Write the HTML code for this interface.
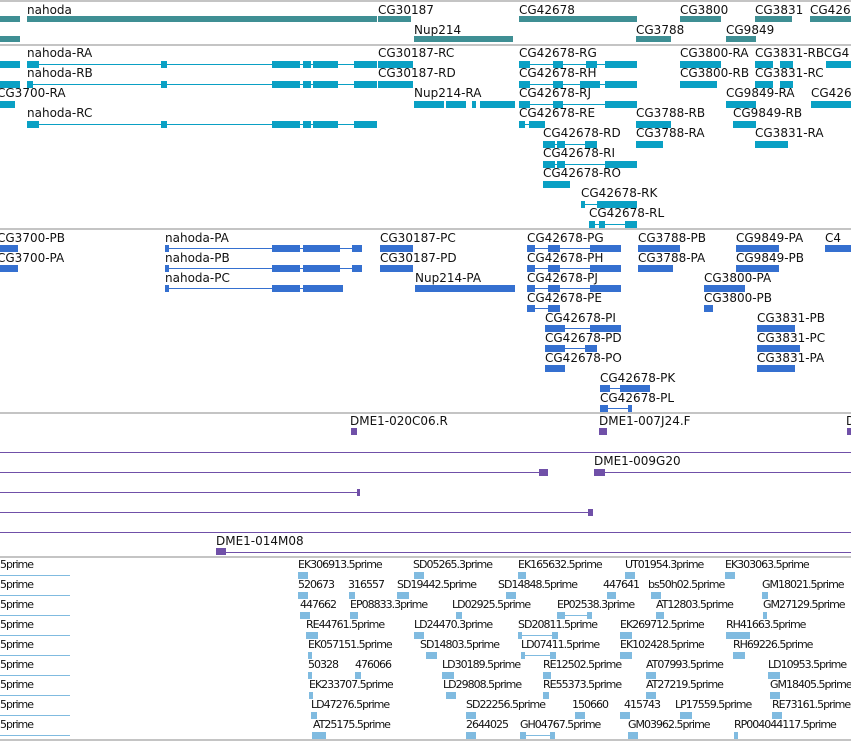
<!DOCTYPE html>
<html><head><meta charset="utf-8"><style>
body{margin:0;width:851px;height:741px;background:#fff;position:relative;overflow:hidden;font-family:"DejaVu Sans","Liberation Sans",sans-serif}
div{position:absolute}
.t{font-size:12px;line-height:14px;color:#111;white-space:nowrap}
.s{font-size:11px;letter-spacing:-1px;line-height:13px;color:#111;white-space:nowrap}
.sep{left:0;width:851px;height:2px;background:#c4c4c4}
.g{height:6px;background:#3f8f94}
.c{background:#0aa0c4}
.b{background:#3570d0}
.p{background:#7050a8}
.q{background:#80bbe0}
.ln{height:1px}
.ex{height:7px}
</style></head><body>
<div class="sep" style="top:0"></div>
<div class="sep" style="top:44px"></div>
<div class="sep" style="top:228px"></div>
<div class="sep" style="top:412px"></div>
<div class="sep" style="top:556px"></div>
<div class="sep" style="top:739px"></div>

<!-- Track 1 genes -->
<div class="t" style="left:27px;top:3px">nahoda</div>
<div class="g" style="left:0;top:16px;width:20px"></div>
<div class="g" style="left:27px;top:16px;width:350px"></div>
<div class="t" style="left:378px;top:3px">CG30187</div>
<div class="g" style="left:378px;top:16px;width:33px"></div>
<div class="t" style="left:519px;top:3px">CG42678</div>
<div class="g" style="left:519px;top:16px;width:118px"></div>
<div class="t" style="left:680px;top:3px">CG3800</div>
<div class="g" style="left:680px;top:16px;width:41px"></div>
<div class="t" style="left:755px;top:3px">CG3831</div>
<div class="g" style="left:755px;top:16px;width:37px"></div>
<div class="t" style="left:810px;top:3px">CG426</div>
<div class="g" style="left:810px;top:16px;width:41px"></div>
<div class="g" style="left:0;top:36px;width:20px"></div>
<div class="t" style="left:414px;top:23px">Nup214</div>
<div class="g" style="left:414px;top:36px;width:99px"></div>
<div class="t" style="left:636px;top:23px">CG3788</div>
<div class="g" style="left:636px;top:36px;width:35px"></div>
<div class="t" style="left:726px;top:23px">CG9849</div>
<div class="g" style="left:726px;top:36px;width:30px"></div>

<!-- Track 2 transcripts -->
<div class="c ex" style="left:0;top:61px;width:20px"></div>
<div class="t" style="left:27px;top:46px">nahoda-RA</div>
<div class="c ln" style="left:27px;top:64px;width:350px"></div>
<div class="c ex" style="left:27px;top:61px;width:12px"></div><div class="c ex" style="left:161px;top:61px;width:6px"></div><div class="c ex" style="left:272px;top:61px;width:28px"></div><div class="c ex" style="left:303px;top:61px;width:8px"></div><div class="c ex" style="left:313px;top:61px;width:25px"></div><div class="c ex" style="left:354px;top:61px;width:23px"></div>
<div class="t" style="left:378px;top:46px">CG30187-RC</div>
<div class="c ex" style="left:378px;top:61px;width:35px"></div>
<div class="t" style="left:519px;top:46px">CG42678-RG</div>
<div class="c ln" style="left:519px;top:64px;width:118px"></div>
<div class="c ex" style="left:519px;top:61px;width:11px"></div><div class="c ex" style="left:553px;top:61px;width:10px"></div><div class="c ex" style="left:586px;top:61px;width:11px"></div><div class="c ex" style="left:605px;top:61px;width:32px"></div>
<div class="t" style="left:680px;top:46px">CG3800-RA</div>
<div class="c ex" style="left:680px;top:61px;width:41px"></div>
<div class="t" style="left:755px;top:46px">CG3831-RBCG4</div>
<div class="c ex" style="left:755px;top:61px;width:18px"></div><div class="c ex" style="left:780px;top:61px;width:13px"></div>
<div class="c ex" style="left:826px;top:61px;width:25px"></div>
<div class="c ex" style="left:0;top:81px;width:20px"></div>
<div class="t" style="left:27px;top:66px">nahoda-RB</div>
<div class="c ln" style="left:27px;top:84px;width:350px"></div>
<div class="c ex" style="left:27px;top:81px;width:6px"></div><div class="c ex" style="left:161px;top:81px;width:6px"></div><div class="c ex" style="left:272px;top:81px;width:28px"></div><div class="c ex" style="left:303px;top:81px;width:8px"></div><div class="c ex" style="left:313px;top:81px;width:25px"></div><div class="c ex" style="left:354px;top:81px;width:23px"></div>
<div class="t" style="left:378px;top:66px">CG30187-RD</div>
<div class="c ex" style="left:378px;top:81px;width:35px"></div>
<div class="t" style="left:519px;top:66px">CG42678-RH</div>
<div class="c ln" style="left:519px;top:84px;width:118px"></div>
<div class="c ex" style="left:519px;top:81px;width:11px"></div><div class="c ex" style="left:553px;top:81px;width:10px"></div><div class="c ex" style="left:580px;top:81px;width:20px"></div><div class="c ex" style="left:605px;top:81px;width:32px"></div>
<div class="t" style="left:680px;top:66px">CG3800-RB</div>
<div class="c ex" style="left:680px;top:81px;width:37px"></div>
<div class="t" style="left:755px;top:66px">CG3831-RC</div>
<div class="c ex" style="left:755px;top:81px;width:18px"></div><div class="c ex" style="left:780px;top:81px;width:13px"></div>
<div class="t" style="left:-3px;top:86px">CG3700-RA</div>
<div class="c ex" style="left:0;top:101px;width:15px"></div>
<div class="t" style="left:414px;top:86px">Nup214-RA</div>
<div class="c ex" style="left:414px;top:101px;width:30px"></div><div class="c ex" style="left:446px;top:101px;width:20px"></div><div class="c ex" style="left:472px;top:101px;width:4px"></div><div class="c ex" style="left:480px;top:101px;width:35px"></div>
<div class="t" style="left:519px;top:86px">CG42678-RJ</div>
<div class="c ln" style="left:519px;top:104px;width:118px"></div>
<div class="c ex" style="left:519px;top:101px;width:11px"></div><div class="c ex" style="left:553px;top:101px;width:10px"></div><div class="c ex" style="left:605px;top:101px;width:32px"></div>
<div class="t" style="left:726px;top:86px">CG9849-RA</div>
<div class="c ex" style="left:726px;top:101px;width:30px"></div>
<div class="t" style="left:811px;top:86px">CG426</div>
<div class="c ex" style="left:811px;top:101px;width:40px"></div>
<div class="t" style="left:27px;top:106px">nahoda-RC</div>
<div class="c ln" style="left:27px;top:124px;width:350px"></div>
<div class="c ex" style="left:27px;top:121px;width:12px"></div><div class="c ex" style="left:161px;top:121px;width:6px"></div><div class="c ex" style="left:272px;top:121px;width:28px"></div><div class="c ex" style="left:303px;top:121px;width:8px"></div><div class="c ex" style="left:313px;top:121px;width:25px"></div><div class="c ex" style="left:354px;top:121px;width:23px"></div>
<div class="t" style="left:519px;top:106px">CG42678-RE</div>
<div class="c ln" style="left:519px;top:124px;width:26px"></div>
<div class="c ex" style="left:519px;top:121px;width:6px"></div><div class="c ex" style="left:529px;top:121px;width:16px"></div>
<div class="t" style="left:636px;top:106px">CG3788-RB</div>
<div class="c ex" style="left:636px;top:121px;width:35px"></div>
<div class="t" style="left:733px;top:106px">CG9849-RB</div>
<div class="c ex" style="left:733px;top:121px;width:23px"></div>
<div class="t" style="left:543px;top:126px">CG42678-RD</div>
<div class="c ln" style="left:543px;top:144px;width:54px"></div>
<div class="c ex" style="left:543px;top:141px;width:12px"></div><div class="c ex" style="left:557px;top:141px;width:8px"></div><div class="c ex" style="left:585px;top:141px;width:12px"></div>
<div class="t" style="left:636px;top:126px">CG3788-RA</div>
<div class="c ex" style="left:636px;top:141px;width:27px"></div>
<div class="t" style="left:755px;top:126px">CG3831-RA</div>
<div class="c ex" style="left:755px;top:141px;width:33px"></div>
<div class="t" style="left:543px;top:146px">CG42678-RI</div>
<div class="c ln" style="left:543px;top:164px;width:94px"></div>
<div class="c ex" style="left:543px;top:161px;width:12px"></div><div class="c ex" style="left:557px;top:161px;width:8px"></div><div class="c ex" style="left:605px;top:161px;width:32px"></div>
<div class="t" style="left:543px;top:166px">CG42678-RO</div>
<div class="c ex" style="left:543px;top:181px;width:27px"></div>
<div class="t" style="left:581px;top:186px">CG42678-RK</div>
<div class="c ln" style="left:581px;top:204px;width:56px"></div>
<div class="c ex" style="left:581px;top:201px;width:4px"></div><div class="c ex" style="left:597px;top:201px;width:40px"></div>
<div class="t" style="left:589px;top:206px">CG42678-RL</div>
<div class="c ln" style="left:589px;top:224px;width:48px"></div>
<div class="c ex" style="left:589px;top:221px;width:6px"></div><div class="c ex" style="left:599px;top:221px;width:6px"></div><div class="c ex" style="left:625px;top:221px;width:12px"></div>

<!-- Track 3 proteins -->
<div class="t" style="left:-3px;top:231px">CG3700-PB</div>
<div class="b ex" style="left:0;top:245px;width:18px"></div>
<div class="t" style="left:165px;top:231px">nahoda-PA</div>
<div class="b ln" style="left:165px;top:248px;width:197px"></div>
<div class="b ex" style="left:165px;top:245px;width:4px"></div><div class="b ex" style="left:272px;top:245px;width:28px"></div><div class="b ex" style="left:303px;top:245px;width:37px"></div><div class="b ex" style="left:352px;top:245px;width:10px"></div>
<div class="t" style="left:380px;top:231px">CG30187-PC</div>
<div class="b ex" style="left:380px;top:245px;width:33px"></div>
<div class="t" style="left:527px;top:231px">CG42678-PG</div>
<div class="b ln" style="left:527px;top:248px;width:94px"></div>
<div class="b ex" style="left:527px;top:245px;width:8px"></div><div class="b ex" style="left:548px;top:245px;width:12px"></div><div class="b ex" style="left:590px;top:245px;width:31px"></div>
<div class="t" style="left:638px;top:231px">CG3788-PB</div>
<div class="b ex" style="left:638px;top:245px;width:42px"></div>
<div class="t" style="left:736px;top:231px">CG9849-PA</div>
<div class="b ex" style="left:736px;top:245px;width:43px"></div>
<div class="t" style="left:825px;top:231px">C4</div>
<div class="b ex" style="left:825px;top:245px;width:26px"></div>
<div class="t" style="left:-3px;top:251px">CG3700-PA</div>
<div class="b ex" style="left:0;top:265px;width:18px"></div>
<div class="t" style="left:165px;top:251px">nahoda-PB</div>
<div class="b ln" style="left:165px;top:268px;width:197px"></div>
<div class="b ex" style="left:165px;top:265px;width:4px"></div><div class="b ex" style="left:272px;top:265px;width:28px"></div><div class="b ex" style="left:303px;top:265px;width:37px"></div><div class="b ex" style="left:352px;top:265px;width:10px"></div>
<div class="t" style="left:380px;top:251px">CG30187-PD</div>
<div class="b ex" style="left:380px;top:265px;width:33px"></div>
<div class="t" style="left:527px;top:251px">CG42678-PH</div>
<div class="b ln" style="left:527px;top:268px;width:94px"></div>
<div class="b ex" style="left:527px;top:265px;width:8px"></div><div class="b ex" style="left:548px;top:265px;width:12px"></div><div class="b ex" style="left:590px;top:265px;width:31px"></div>
<div class="t" style="left:638px;top:251px">CG3788-PA</div>
<div class="b ex" style="left:638px;top:265px;width:35px"></div>
<div class="t" style="left:736px;top:251px">CG9849-PB</div>
<div class="b ex" style="left:736px;top:265px;width:43px"></div>
<div class="t" style="left:165px;top:271px">nahoda-PC</div>
<div class="b ln" style="left:165px;top:288px;width:177px"></div>
<div class="b ex" style="left:165px;top:285px;width:4px"></div><div class="b ex" style="left:272px;top:285px;width:28px"></div><div class="b ex" style="left:303px;top:285px;width:40px"></div>
<div class="t" style="left:415px;top:271px">Nup214-PA</div>
<div class="b ex" style="left:415px;top:285px;width:100px"></div>
<div class="t" style="left:527px;top:271px">CG42678-PJ</div>
<div class="b ln" style="left:527px;top:288px;width:94px"></div>
<div class="b ex" style="left:527px;top:285px;width:8px"></div><div class="b ex" style="left:548px;top:285px;width:12px"></div><div class="b ex" style="left:590px;top:285px;width:31px"></div>
<div class="t" style="left:704px;top:271px">CG3800-PA</div>
<div class="b ex" style="left:704px;top:285px;width:41px"></div>
<div class="t" style="left:527px;top:291px">CG42678-PE</div>
<div class="b ln" style="left:527px;top:308px;width:33px"></div>
<div class="b ex" style="left:527px;top:305px;width:8px"></div><div class="b ex" style="left:548px;top:305px;width:12px"></div>
<div class="t" style="left:704px;top:291px">CG3800-PB</div>
<div class="b ex" style="left:704px;top:305px;width:9px"></div>
<div class="t" style="left:545px;top:311px">CG42678-PI</div>
<div class="b ln" style="left:545px;top:328px;width:76px"></div>
<div class="b ex" style="left:545px;top:325px;width:20px"></div><div class="b ex" style="left:590px;top:325px;width:31px"></div>
<div class="t" style="left:757px;top:311px">CG3831-PB</div>
<div class="b ex" style="left:757px;top:325px;width:38px"></div>
<div class="t" style="left:545px;top:331px">CG42678-PD</div>
<div class="b ln" style="left:545px;top:348px;width:52px"></div>
<div class="b ex" style="left:545px;top:345px;width:20px"></div><div class="b ex" style="left:585px;top:345px;width:12px"></div>
<div class="t" style="left:757px;top:331px">CG3831-PC</div>
<div class="b ex" style="left:757px;top:345px;width:43px"></div>
<div class="t" style="left:545px;top:351px">CG42678-PO</div>
<div class="b ex" style="left:545px;top:365px;width:20px"></div>
<div class="t" style="left:757px;top:351px">CG3831-PA</div>
<div class="b ex" style="left:757px;top:365px;width:38px"></div>
<div class="t" style="left:600px;top:371px">CG42678-PK</div>
<div class="b ln" style="left:600px;top:388px;width:50px"></div>
<div class="b ex" style="left:600px;top:385px;width:10px"></div><div class="b ex" style="left:620px;top:385px;width:30px"></div>
<div class="t" style="left:600px;top:391px">CG42678-PL</div>
<div class="b ln" style="left:600px;top:408px;width:32px"></div>
<div class="b ex" style="left:600px;top:405px;width:8px"></div><div class="b ex" style="left:628px;top:405px;width:4px"></div>

<!-- Track 4 clones -->
<div class="t" style="left:350px;top:414px">DME1-020C06.R</div>
<div class="p ex" style="left:351px;top:428px;width:6px"></div>
<div class="t" style="left:599px;top:414px">DME1-007J24.F</div>
<div class="p ex" style="left:599px;top:428px;width:8px"></div>
<div class="t" style="left:846px;top:414px">D</div>
<div class="p ex" style="left:847px;top:428px;width:4px"></div>
<div class="p ln" style="left:0;top:452px;width:851px"></div>
<div class="t" style="left:594px;top:454px">DME1-009G20</div>
<div class="p ln" style="left:0;top:472px;width:545px"></div>
<div class="p ex" style="left:539px;top:469px;width:9px"></div>
<div class="p ln" style="left:594px;top:472px;width:257px"></div>
<div class="p ex" style="left:594px;top:469px;width:11px"></div>
<div class="p ln" style="left:0;top:492px;width:360px"></div>
<div class="p ex" style="left:357px;top:489px;width:3px"></div>
<div class="p ln" style="left:0;top:512px;width:593px"></div>
<div class="p ex" style="left:588px;top:509px;width:5px"></div>
<div class="p ln" style="left:0;top:532px;width:851px"></div>
<div class="t" style="left:216px;top:534px">DME1-014M08</div>
<div class="p ln" style="left:216px;top:552px;width:635px"></div>
<div class="p ex" style="left:216px;top:548px;width:10px"></div>

<!-- Track 5 reads -->
<div class="s" style="left:0;top:558px">5prime</div><div class="q ln" style="left:0;top:575px;width:70px"></div>
<div class="s" style="left:0;top:578px">5prime</div><div class="q ln" style="left:0;top:595px;width:70px"></div>
<div class="s" style="left:0;top:598px">5prime</div><div class="q ln" style="left:0;top:615px;width:70px"></div>
<div class="s" style="left:0;top:618px">5prime</div><div class="q ln" style="left:0;top:635px;width:70px"></div>
<div class="s" style="left:0;top:638px">5prime</div><div class="q ln" style="left:0;top:655px;width:70px"></div>
<div class="s" style="left:0;top:658px">5prime</div><div class="q ln" style="left:0;top:675px;width:70px"></div>
<div class="s" style="left:0;top:678px">5prime</div><div class="q ln" style="left:0;top:695px;width:70px"></div>
<div class="s" style="left:0;top:698px">5prime</div><div class="q ln" style="left:0;top:715px;width:70px"></div>
<div class="s" style="left:0;top:718px">5prime</div><div class="q ln" style="left:0;top:735px;width:70px"></div>

<div class="s" style="left:298px;top:558px">EK306913.5prime</div><div class="q ex" style="left:298px;top:572px;width:10px"></div>
<div class="s" style="left:413px;top:558px">SD05265.3prime</div><div class="q ex" style="left:414px;top:572px;width:10px"></div>
<div class="s" style="left:518px;top:558px">EK165632.5prime</div><div class="q ex" style="left:518px;top:572px;width:8px"></div>
<div class="s" style="left:625px;top:558px">UT01954.3prime</div><div class="q ex" style="left:625px;top:572px;width:10px"></div>
<div class="s" style="left:725px;top:558px">EK303063.5prime</div><div class="q ex" style="left:725px;top:572px;width:10px"></div>

<div class="s" style="left:298px;top:578px">520673</div><div class="q ex" style="left:298px;top:592px;width:10px"></div>
<div class="s" style="left:348px;top:578px">316557</div><div class="q ex" style="left:349px;top:592px;width:6px"></div>
<div class="s" style="left:397px;top:578px">SD19442.5prime</div><div class="q ex" style="left:397px;top:592px;width:12px"></div>
<div class="s" style="left:498px;top:578px">SD14848.5prime</div><div class="q ex" style="left:506px;top:592px;width:10px"></div>
<div class="s" style="left:603px;top:578px">447641</div><div class="q ex" style="left:607px;top:592px;width:9px"></div>
<div class="s" style="left:648px;top:578px">bs50h02.5prime</div><div class="q ex" style="left:651px;top:592px;width:10px"></div>
<div class="s" style="left:762px;top:578px">GM18021.5prime</div><div class="q ex" style="left:762px;top:592px;width:6px"></div>

<div class="s" style="left:300px;top:598px">447662</div><div class="q ex" style="left:300px;top:612px;width:10px"></div>
<div class="s" style="left:350px;top:598px">EP08833.3prime</div><div class="q ex" style="left:350px;top:612px;width:8px"></div>
<div class="s" style="left:452px;top:598px">LD02925.5prime</div><div class="q ex" style="left:456px;top:612px;width:6px"></div>
<div class="s" style="left:557px;top:598px">EP02538.3prime</div><div class="q ln" style="left:557px;top:615px;width:35px"></div><div class="q ex" style="left:557px;top:612px;width:8px"></div><div class="q ex" style="left:587px;top:612px;width:5px"></div>
<div class="s" style="left:656px;top:598px">AT12803.5prime</div><div class="q ex" style="left:656px;top:612px;width:8px"></div>
<div class="s" style="left:763px;top:598px">GM27129.5prime</div><div class="q ex" style="left:763px;top:612px;width:4px"></div>

<div class="s" style="left:306px;top:618px">RE44761.5prime</div><div class="q ex" style="left:306px;top:632px;width:12px"></div>
<div class="s" style="left:414px;top:618px">LD24470.3prime</div><div class="q ex" style="left:414px;top:632px;width:10px"></div>
<div class="s" style="left:518px;top:618px">SD20811.5prime</div><div class="q ln" style="left:518px;top:635px;width:40px"></div><div class="q ex" style="left:518px;top:632px;width:4px"></div><div class="q ex" style="left:552px;top:632px;width:6px"></div>
<div class="s" style="left:620px;top:618px">EK269712.5prime</div><div class="q ex" style="left:620px;top:632px;width:12px"></div>
<div class="s" style="left:726px;top:618px">RH41663.5prime</div><div class="q ex" style="left:726px;top:632px;width:24px"></div>

<div class="s" style="left:308px;top:638px">EK057151.5prime</div><div class="q ex" style="left:308px;top:652px;width:4px"></div>
<div class="s" style="left:420px;top:638px">SD14803.5prime</div><div class="q ex" style="left:426px;top:652px;width:11px"></div>
<div class="s" style="left:521px;top:638px">LD07411.5prime</div><div class="q ln" style="left:521px;top:655px;width:35px"></div><div class="q ex" style="left:521px;top:652px;width:4px"></div><div class="q ex" style="left:550px;top:652px;width:6px"></div>
<div class="s" style="left:620px;top:638px">EK102428.5prime</div><div class="q ex" style="left:620px;top:652px;width:12px"></div>
<div class="s" style="left:733px;top:638px">RH69226.5prime</div><div class="q ex" style="left:733px;top:652px;width:12px"></div>

<div class="s" style="left:308px;top:658px">50328</div><div class="q ex" style="left:308px;top:672px;width:4px"></div>
<div class="s" style="left:355px;top:658px">476066</div><div class="q ex" style="left:355px;top:672px;width:6px"></div>
<div class="s" style="left:442px;top:658px">LD30189.5prime</div><div class="q ex" style="left:442px;top:672px;width:12px"></div>
<div class="s" style="left:543px;top:658px">RE12502.5prime</div><div class="q ex" style="left:543px;top:672px;width:8px"></div>
<div class="s" style="left:646px;top:658px">AT07993.5prime</div><div class="q ex" style="left:646px;top:672px;width:10px"></div>
<div class="s" style="left:768px;top:658px">LD10953.5prime</div><div class="q ex" style="left:768px;top:672px;width:12px"></div>

<div class="s" style="left:309px;top:678px">EK233707.5prime</div><div class="q ex" style="left:309px;top:692px;width:4px"></div>
<div class="s" style="left:443px;top:678px">LD29808.5prime</div><div class="q ex" style="left:446px;top:692px;width:10px"></div>
<div class="s" style="left:543px;top:678px">RE55373.5prime</div><div class="q ex" style="left:543px;top:692px;width:6px"></div>
<div class="s" style="left:646px;top:678px">AT27219.5prime</div><div class="q ex" style="left:646px;top:692px;width:10px"></div>
<div class="s" style="left:770px;top:678px">GM18405.5prime</div><div class="q ex" style="left:770px;top:692px;width:10px"></div>

<div class="s" style="left:311px;top:698px">LD47276.5prime</div><div class="q ex" style="left:311px;top:712px;width:6px"></div>
<div class="s" style="left:466px;top:698px">SD22256.5prime</div><div class="q ex" style="left:466px;top:712px;width:10px"></div>
<div class="s" style="left:572px;top:698px">150660</div><div class="q ex" style="left:575px;top:712px;width:10px"></div>
<div class="s" style="left:624px;top:698px">415743</div><div class="q ex" style="left:620px;top:712px;width:10px"></div>
<div class="s" style="left:675px;top:698px">LP17559.5prime</div><div class="q ex" style="left:680px;top:712px;width:12px"></div>
<div class="s" style="left:772px;top:698px">RE73161.5prime</div><div class="q ex" style="left:772px;top:712px;width:10px"></div>

<div class="s" style="left:313px;top:718px">AT25175.5prime</div><div class="q ex" style="left:312px;top:732px;width:14px"></div>
<div class="s" style="left:466px;top:718px">2644025</div><div class="q ex" style="left:466px;top:732px;width:10px"></div>
<div class="s" style="left:520px;top:718px">GH04767.5prime</div><div class="q ln" style="left:520px;top:735px;width:35px"></div><div class="q ex" style="left:520px;top:732px;width:6px"></div><div class="q ex" style="left:550px;top:732px;width:5px"></div>
<div class="s" style="left:628px;top:718px">GM03962.5prime</div><div class="q ex" style="left:628px;top:732px;width:10px"></div>
<div class="s" style="left:734px;top:718px">RP004044117.5prime</div><div class="q ex" style="left:734px;top:732px;width:4px"></div>
</body></html>
